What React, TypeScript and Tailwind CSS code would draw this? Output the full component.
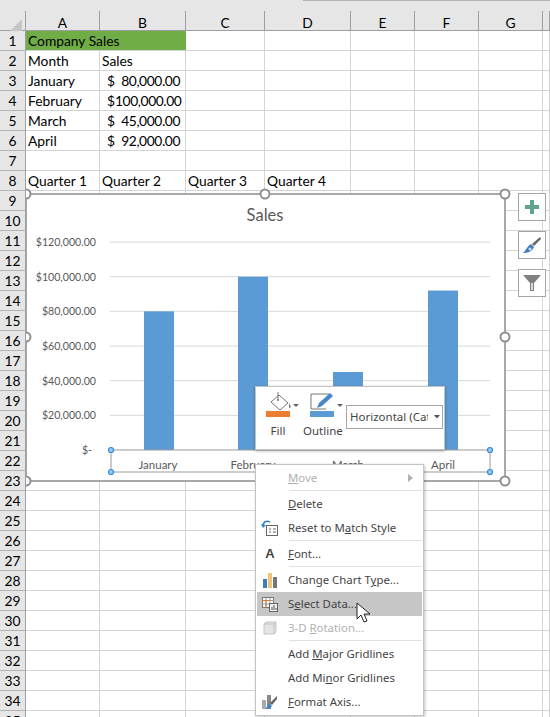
import { ReactNode } from "react";

const cols = ["A", "B", "C", "D", "E", "F", "G", ""];
const gridCols = "grid grid-cols-[26px_74px_86px_79px_86px_64px_64px_64px_7px]";
const cellFont = "font-['Lato','Liberation_Sans',sans-serif] text-[13.8px] text-black pt-[2px]";

const sheet: Record<number, string[]> = {
  2: ["Month", "Sales"],
  8: ["Quarter 1", "Quarter 2", "Quarter 3", "Quarter 4"],
};
const money: Record<number, [string, string]> = {
  3: ["January", "80,000.00"],
  4: ["February", "100,000.00"],
  5: ["March", "45,000.00"],
  6: ["April", "92,000.00"],
};

function RowHead({ n }: { n: number }) {
  return (
    <div className={`${cellFont} h-5 bg-[#e6e6e6] border-r border-b border-r-[#9f9f9f] border-b-[#b4b4b4] flex items-center justify-center text-[#222]`}>
      {n}
    </div>
  );
}

function Cell({ children, className = "" }: { children?: ReactNode; className?: string }) {
  return (
    <div className={`${cellFont} h-5 border-r border-b border-[#d4d4d4] px-[2px] flex items-center whitespace-nowrap ${className}`}>
      {children}
    </div>
  );
}

function Row({ n }: { n: number }) {
  if (n === 1) {
    return (
      <div className={gridCols}>
        <RowHead n={1} />
        <div className={`${cellFont} col-span-2 h-5 bg-[#70ad47] border-b border-[#d4d4d4] px-[2px] flex items-center`}>Company Sales</div>
        {cols.slice(2).map((_, i) => <Cell key={i} />)}
      </div>
    );
  }
  const vals = sheet[n] ?? [];
  const m = money[n];
  return (
    <div className={gridCols}>
      <RowHead n={n} />
      {m ? (
        <>
          <Cell>{m[0]}</Cell>
          <Cell className="justify-between pl-[7px] pr-[5px]">
            <span>$</span>
            <span className="tracking-[-0.4px]">{m[1]}</span>
          </Cell>
        </>
      ) : null}
      {cols.slice(m ? 2 : 0).map((_, i) => (
        <Cell key={i}>{vals[i]}</Cell>
      ))}
    </div>
  );
}

const bars = [
  { x: 144, v: 80000 },
  { x: 238, v: 100000 },
  { x: 333, v: 45000 },
  { x: 428, v: 92000 },
];
const ticks = ["$120,000.00", "$100,000.00", "$80,000.00", "$60,000.00", "$40,000.00", "$20,000.00"];
const months = [["January", 158], ["February", 253], ["March", 348], ["April", 443]] as const;
const handles = [[265, 194], [505, 194], [505, 337], [505, 481], [265, 481], [26, 481], [26, 337], [26, 194]];
const blue = [[111, 450], [490, 450], [111, 472], [490, 472]];
const chartFont = "Lato, 'Liberation Sans', sans-serif";

function Chart() {
  return (
    <svg viewBox="26 186 524 304" className="absolute left-[26px] top-[186px] w-[524px] h-[304px]">
      <rect x="26" y="194" width="479" height="287" fill="#fff" stroke="#8c8c8c" strokeWidth="1.5" />
      <text x="265" y="221" textAnchor="middle" fontSize="16.5" fill="#595959" fontFamily={chartFont}>Sales</text>
      {ticks.map((t, i) => {
        const y = 242 + i * 34.67;
        return (
          <g key={t}>
            <line x1="110" x2="490" y1={y} y2={y} stroke="#d9d9d9" />
            <text x="96" y={y + 4} textAnchor="end" fontSize="10.6" fill="#595959" fontFamily={chartFont}>{t}</text>
          </g>
        );
      })}
      <text x="92" y="454" textAnchor="end" fontSize="10.6" fill="#595959" fontFamily={chartFont}>$-</text>
      {bars.map((b) => {
        const h = (b.v / 120000) * 208;
        return <rect key={b.x} x={b.x} y={450 - h} width="30" height={h} fill="#5b9bd5" />;
      })}
      <rect x="111" y="450" width="379" height="22" fill="none" stroke="#9a9a9a" />
      {months.map(([m, x]) => (
        <text key={m} x={x} y="469" textAnchor="middle" fontSize="11.5" fill="#595959" fontFamily={chartFont}>{m}</text>
      ))}
      {blue.map(([x, y]) => (
        <circle key={`${x}-${y}`} cx={x} cy={y} r="2.5" fill="#9cc8ee" stroke="#2f8fdc" strokeWidth="1.2" />
      ))}
      {handles.map(([x, y]) => (
        <circle key={`${x}-${y}`} cx={x} cy={y} r="4.5" fill="#fff" stroke="#8f8f8f" strokeWidth="2" />
      ))}
    </svg>
  );
}

function SideButton({ children, className }: { children: ReactNode; className: string }) {
  return (
    <div className={`absolute left-[518px] w-[28px] h-[28px] bg-white border border-[#a6a6a6] flex items-center justify-center ${className}`}>
      {children}
    </div>
  );
}

function MiniToolbar() {
  const label = "font-['Noto_Sans',sans-serif] text-[11.5px] text-[#444]";
  return (
    <div className="absolute left-[255px] top-[386px] w-[190px] h-[64px] bg-white border border-[#c4c4c4] shadow-[0_1px_3px_rgba(0,0,0,0.3)]">
      <div className={`absolute left-[10px] top-[5px] w-[24px] flex flex-col items-start ${label}`}>
        <svg width="38" height="26" viewBox="0 0 38 26" className="shrink-0">
          <path d="M5 10 L13 3 L22 11 L14 18 Z" fill="#fff" stroke="#777" />
          <path d="M12 0 L12 8" stroke="#777" />
          <circle cx="12" cy="8" r="1" fill="#777" />
          <path d="M23 11 L25 15 L23 16 Z" fill="#777" />
          <path d="M27 12 h6 l-3 3 Z" fill="#666" />
          <rect x="0" y="19" width="24" height="6" fill="#ed7d31" />
        </svg>
        <span className="w-full text-center mt-1">Fill</span>
      </div>
      <div className={`absolute left-[47px] top-[5px] w-[38px] flex flex-col items-start ${label}`}>
        <svg width="38" height="26" viewBox="0 0 38 26" className="ml-[7px] shrink-0">
          <path d="M1 17 V2 H19 M16 17 H1" fill="none" stroke="#777" />
          <path d="M7 16 L9 11 L20 1 L23 4 L12 14 Z" fill="#4a86c5" />
          <path d="M27 12 h6 l-3 3 Z" fill="#666" />
          <rect x="0" y="19" width="24" height="6" fill="#5b9bd5" />
        </svg>
        <span className="w-full text-center mt-1">Outline</span>
      </div>
      <div className="absolute left-[90px] top-[18px] w-[97px] h-[24px] border border-[#a6a6a6] flex items-center pl-[3px] font-['Noto_Sans',sans-serif] text-[11.5px] text-[#444]">
        <span className="w-[78px] overflow-hidden whitespace-nowrap">Horizontal (Category)</span>
        <svg width="6" height="4" viewBox="0 0 6 4" className="ml-[6px]"><path d="M0 0 h6 l-3 3.5 Z" fill="#555" /></svg>
      </div>
    </div>
  );
}

function MenuItem({ icon, children, disabled, active, arrow }: { icon?: ReactNode; children: ReactNode; disabled?: boolean; active?: boolean; arrow?: boolean }) {
  return (
    <div className={`h-6 flex items-center ${active ? "bg-[#c6c6c6]" : ""} ${disabled ? "text-[#b1b1b1]" : "text-[#444]"}`}>
      <div className="w-[26px] mr-[5px] flex justify-center shrink-0">{icon}</div>
      <div className="whitespace-nowrap">{children}</div>
      {arrow && <svg width="5" height="8" viewBox="0 0 5 8" className="ml-auto mr-[9px]"><path d="M0 0 L5 4 L0 8 Z" fill="#b1b1b1" /></svg>}
    </div>
  );
}

const Sep = () => <div className="h-[2px] ml-[32px] border-t border-[#e1e1e1]" />;

function ContextMenu() {
  return (
    <div className="absolute left-[255px] top-[464px] w-[169px] bg-white border border-[#c4c4c4] p-px shadow-[1px_1px_3px_rgba(0,0,0,0.25)] font-['Noto_Sans',sans-serif] text-[11.4px]">
      <MenuItem disabled arrow><u>M</u>ove</MenuItem>
      <Sep />
      <MenuItem><u>D</u>elete</MenuItem>
      <MenuItem icon={
        <svg width="18" height="16" viewBox="0 0 18 16">
          <rect x="5.5" y="5.5" width="11" height="10" fill="#fff" stroke="#666" />
          <path d="M8 9 h2 M12 9 h3 M8 12 h2 M12 12 h3" stroke="#666" />
          <path d="M9 2 C5 0 2 2 2 6" fill="none" stroke="#2f7ec4" strokeWidth="1.5" />
          <path d="M0 4 L2 8 L5 5 Z" fill="#2f7ec4" />
        </svg>
      }>Reset to M<u>a</u>tch Style</MenuItem>
      <Sep />
      <MenuItem icon={<span className="font-['Liberation_Sans',sans-serif] font-bold text-[13px] text-[#444]">A</span>}><u>F</u>ont...</MenuItem>
      <Sep />
      <MenuItem icon={
        <svg width="15" height="15" viewBox="0 0 15 15">
          <rect x="0" y="6" width="4" height="9" fill="#3f7cbf" />
          <rect x="5" y="0" width="4" height="15" fill="#f0c27a" />
          <rect x="10" y="4" width="4" height="11" fill="#777" />
        </svg>
      }>Change Chart T<u>y</u>pe...</MenuItem>
      <MenuItem active icon={
        <svg width="16" height="16" viewBox="0 0 16 16">
          <rect x="0.5" y="1.5" width="11" height="10" fill="#fff" stroke="#777" />
          <path d="M0 4.5 h12 M4 2 v9 M8 2 v9 M0 8 h12" stroke="#999" />
          <path d="M0 4.5 h7 M4 4.5 v7" stroke="#d9772b" />
          <rect x="7.5" y="7.5" width="8" height="8" fill="#eee" stroke="#666" />
          <path d="M10 14 v-3 M12 14 v-5 M14 14 v-2" stroke="#555" />
        </svg>
      }>S<u>e</u>lect Data...</MenuItem>
      <MenuItem disabled icon={
        <svg width="14" height="14" viewBox="0 0 14 14">
          <path d="M3 1 H13 V11 L11 13 H1 V3 Z" fill="#e4e4e4" stroke="#c4c4c4" />
          <path d="M1 3 H11 V13 M11 3 L13 1" fill="none" stroke="#c4c4c4" />
        </svg>
      }>3-D <u>R</u>otation...</MenuItem>
      <Sep />
      <MenuItem>Add <u>M</u>ajor Gridlines</MenuItem>
      <MenuItem>Add Mi<u>n</u>or Gridlines</MenuItem>
      <MenuItem icon={
        <svg width="16" height="16" viewBox="0 0 16 16">
          <rect x="0" y="6" width="4" height="9" fill="#aaa" />
          <rect x="5" y="1" width="4" height="14" fill="#888" />
          <path d="M15 2 L8 9 L10 11 L15 5 Z" fill="#666" />
          <path d="M7 9 L10 12 C8 15 5 15 3 15 C5 14 5 11 7 9 Z" fill="#3f86c9" />
        </svg>
      }><u>F</u>ormat Axis...</MenuItem>
    </div>
  );
}

export default function App() {
  const rows = Array.from({ length: 35 }, (_, i) => i + 1);
  return (
    <div className="relative w-[550px] h-[717px] overflow-hidden bg-white">
      <div className="h-[11px] bg-[#e6e6e6]">
        <div className="ml-[303px] h-px bg-[#b4b4b4]" />
      </div>
      <div className={`${gridCols} h-5 bg-[#e6e6e6] border-b border-[#9f9f9f]`}>
        <div className="relative border-r border-[#9f9f9f]">
          <svg width="12" height="12" viewBox="0 0 12 12" className="absolute right-[3px] bottom-[3px]"><path d="M12 0 V12 H0 Z" fill="#c6c6c6" /></svg>
        </div>
        {cols.map((c, i) => (
          <div key={i} className={`${cellFont} border-r border-[#9f9f9f] flex items-center justify-center text-[#222]`}>{c}</div>
        ))}
      </div>
      {rows.map((n) => <Row key={n} n={n} />)}

      <Chart />
      <SideButton className="top-[193px]">
        <svg width="16" height="16" viewBox="0 0 16 16"><path d="M6 1 H10 V6 H15 V10 H10 V15 H6 V10 H1 V6 H6 Z" fill="#5fa58a" /></svg>
      </SideButton>
      <SideButton className="top-[231px]">
        <svg width="20" height="20" viewBox="0 0 20 20">
          <path d="M18 2 L19 4 L12 11 L10 9 Z" fill="#666" />
          <path d="M9 9 L12 12 C10 17 5 18 1 18 C4 16 5 11 9 9 Z" fill="#3f7cbf" />
          <circle cx="8" cy="14" r="1.5" fill="#cfe0f2" />
        </svg>
      </SideButton>
      <SideButton className="top-[269px]">
        <svg width="20" height="18" viewBox="0 0 20 18">
          <path d="M1 1 H19 L12 9 V17 H8 V9 Z" fill="#808080" />
          <path d="M9 9 H11 V16 H9 Z" fill="#d9d9d9" />
        </svg>
      </SideButton>

      <MiniToolbar />
      <ContextMenu />

      <svg width="16" height="22" viewBox="0 0 16 22" className="absolute left-[356px] top-[602px]">
        <path d="M1 1 V17 L5 13 L8 20 L11 19 L8 12 L14 12 Z" fill="#fff" stroke="#222" />
      </svg>
    </div>
  );
}
